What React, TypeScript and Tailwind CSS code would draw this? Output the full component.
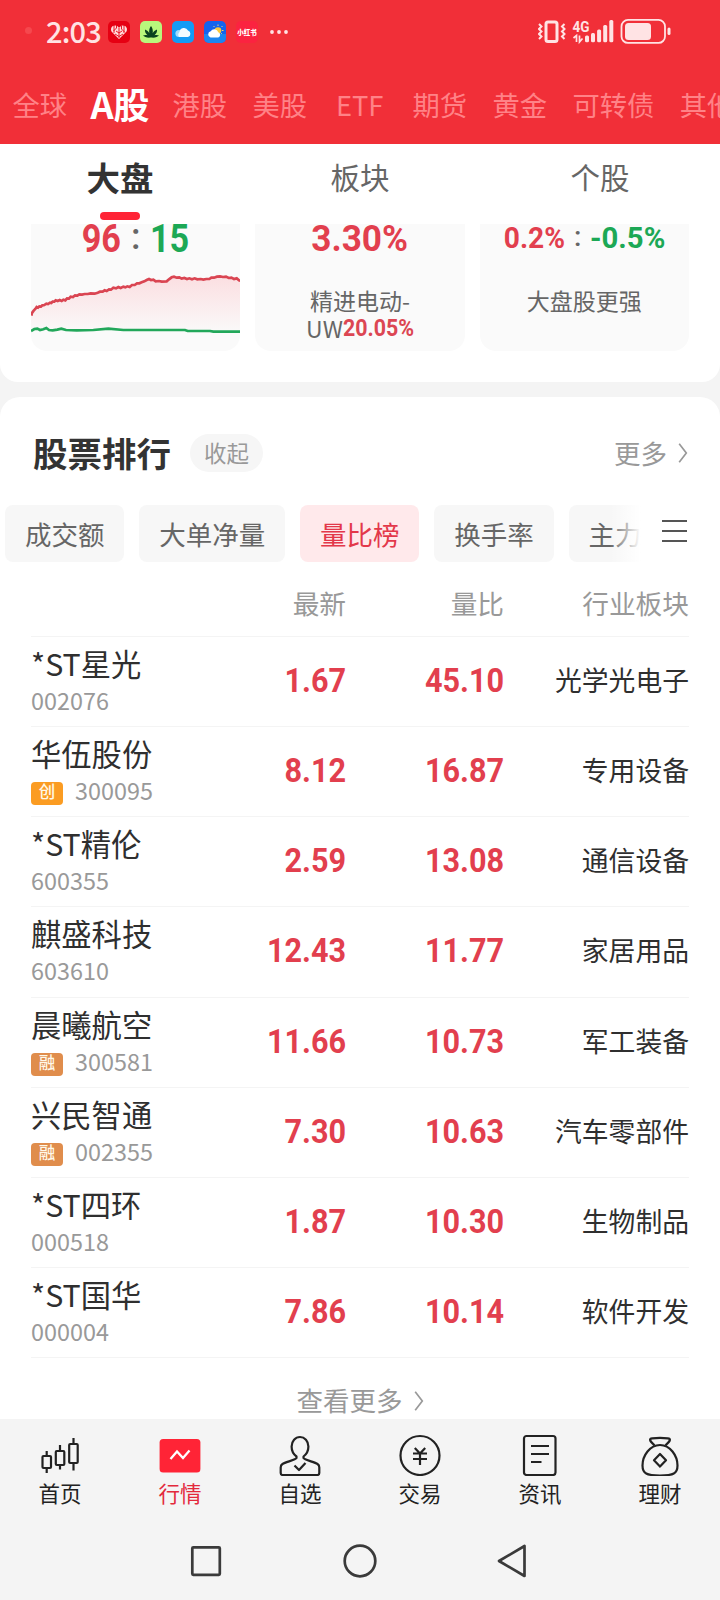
import type { ReactNode } from "react";

const markets = ["全球", "A股", "港股", "美股", "ETF", "期货", "黄金", "可转债", "其他"];

type Stock = { name: string; code: string; tag?: string; price: string; ratio: string; sector: string };

const stocks: Stock[] = [
  { name: "*ST星光", code: "002076", price: "1.67", ratio: "45.10", sector: "光学光电子" },
  { name: "华伍股份", code: "300095", tag: "创", price: "8.12", ratio: "16.87", sector: "专用设备" },
  { name: "*ST精伦", code: "600355", price: "2.59", ratio: "13.08", sector: "通信设备" },
  { name: "麒盛科技", code: "603610", price: "12.43", ratio: "11.77", sector: "家居用品" },
  { name: "晨曦航空", code: "300581", tag: "融", price: "11.66", ratio: "10.73", sector: "军工装备" },
  { name: "兴民智通", code: "002355", tag: "融", price: "7.30", ratio: "10.63", sector: "汽车零部件" },
  { name: "*ST四环", code: "000518", price: "1.87", ratio: "10.30", sector: "生物制品" },
  { name: "*ST国华", code: "000004", price: "7.86", ratio: "10.14", sector: "软件开发" },
];

function StatusBar() {
  return (
    <div className="flex h-[64px] items-center pl-[25px] pr-[48px] text-[#ffe3e4]">
      <span className="mt-[-4px] size-[7px] rounded-full bg-[#f5484e]" />
      <span className="mt-[-4px] ml-[14px] w-[55px] text-[29px] leading-[32px] font-medium tracking-[-0.8px]">2:03</span>
      <div className="ml-[7px] flex items-center gap-[10px]">
        <svg width="22" height="22" viewBox="0 0 22 22">
          <rect width="22" height="22" rx="5" fill="#e60012" />
          <path d="M11 18 3.500 10.500C2 7 4.500 4 7.500 4.500 9.500 4.500 10.500 6 11 7 11.500 6 13 4.500 15 4.500c3 0 5 3 3.500 6Z" fill="#ffdcdc" />
          <path d="M6 4v8M8.500 4v3l-3 3M11 7v10M13.500 5v3l3 3M16 4v8M8 10l3 2 3-2M7 13l4 2.500 4-2.500" stroke="#e60012" strokeWidth="0.9" fill="none" />
        </svg>
        <svg width="22" height="22" viewBox="0 0 22 22">
          <rect width="22" height="22" rx="5" fill="#b9f77c" />
          <path d="M11 16.500C7 17 4.500 16 3 14.500c1.500-.7 3-.8 4.500-.3C5.500 12.500 4.700 10.500 5 8.500c2 .8 3.500 2 4.300 3.800C8.800 9.500 9.500 7 11 5c1.500 2 2.200 4.500 1.700 7.300C13.500 10.500 15 9.300 17 8.500c.3 2-.5 4-2.500 5.700 1.500-.5 3-.4 4.500.3-1.500 1.500-4 2.500-8 2Z" fill="#09421f" />
        </svg>
        <svg width="22" height="22" viewBox="0 0 22 22">
          <rect width="22" height="22" rx="5" fill="#139bf5" />
          <circle cx="7" cy="12.500" r="3.600" fill="#9fdcff" />
          <path d="M7 16a4 4 0 0 1 .5-5A4.500 4.500 0 0 1 16 9.500 3.400 3.400 0 0 1 16 16Z" fill="#f2fbff" />
        </svg>
        <svg width="22" height="22" viewBox="0 0 22 22">
          <rect width="22" height="22" rx="5" fill="#1463ee" />
          <path d="M0 13h22v4a5 5 0 0 1-5 5H5a5 5 0 0 1-5-5Z" fill="#1c86f0" />
          <path d="M14 3.500v1.500M18.500 5l-1 1M19.500 9.500h-1.500M9.500 5l1 1M18 13l-.8-.8" stroke="#e9d37a" strokeWidth="1" />
          <circle cx="14" cy="9.500" r="3.300" fill="#fbc93c" />
          <path d="M6.500 16.500a3.200 3.200 0 0 1 .2-6.200 4.200 4.200 0 0 1 7.600.9 2.800 2.800 0 0 1 0 5.300Z" fill="#fff" />
        </svg>
        <div className="flex size-[22px] items-center justify-center rounded-[5px] bg-[#fb2340]">
          <span className="text-[6.500px] leading-none font-black whitespace-nowrap text-white">小红书</span>
        </div>
        <svg className="ml-[2px]" width="18" height="4" viewBox="0 0 18 4" fill="currentColor">
          <circle cx="2" cy="2" r="1.900" />
          <circle cx="9" cy="2" r="1.900" />
          <circle cx="16" cy="2" r="1.900" />
        </svg>
      </div>
      <svg className="ml-auto" width="134" height="26" viewBox="0 0 134 26" fill="none">
        <rect x="8" y="3" width="11" height="19.500" rx="2" stroke="currentColor" strokeWidth="3" />
        <path d="M1 5l2.500 2.500L1 10l2.500 2.500L1 15l2.500 2.500L1 20M26.500 5 24 7.500l2.500 2.500-2.500 2.500 2.500 2.500-2.500 2.500 2.500 2.500" stroke="currentColor" strokeWidth="2" />
        <text x="34.500" y="13" fontSize="15.500" fontWeight="700" fill="currentColor" fontFamily="Roboto" textLength="17" lengthAdjust="spacingAndGlyphs">
          4G
        </text>
        <path d="M35.500 19l3-2.500V23M41.500 16.500V23l3-3.500" stroke="currentColor" strokeWidth="1.700" />
        <g fill="currentColor">
          <rect x="47" y="16.500" width="4" height="6.800" rx="1.500" />
          <rect x="53" y="14" width="4" height="9.300" rx="1.500" />
          <rect x="59.100" y="10.500" width="4" height="12.800" rx="1.500" />
          <rect x="65.200" y="6" width="4" height="17.300" rx="1.500" />
          <rect x="71.300" y="1" width="4" height="22.300" rx="1.500" />
        </g>
        <rect x="83.500" y="0.900" width="43.500" height="23" rx="6.500" stroke="currentColor" strokeWidth="1.800" />
        <rect x="87" y="4" width="26" height="17" rx="3.500" fill="currentColor" />
        <rect x="129.500" y="8.500" width="3" height="7.500" rx="1.500" fill="currentColor" />
      </svg>
    </div>
  );
}

function TopBar() {
  return (
    <header className="h-[144px] shrink-0 overflow-hidden bg-[#f12f38]">
      <StatusBar />
      <nav className="flex h-[80px] items-center text-[27.300px] leading-[40px] whitespace-nowrap text-[#ff8287]">
        {markets.map((m) =>
          m === "A股" ? (
            <span key={m} className="mt-[-2px] flex w-[80px] shrink-0 justify-center text-[36px] font-bold text-white">
              {m}
            </span>
          ) : (
            <span key={m} className="min-w-[80px] shrink-0 pr-[13px] pl-[12.400px] text-center">
              {m}
            </span>
          ),
        )}
      </nav>
    </header>
  );
}

function Chevron() {
  return (
    <svg width="10" height="20" viewBox="0 0 10 20" fill="none" stroke="#999" strokeWidth="1.700">
      <path d="M1.200 0.800 8.300 10 1.200 19.200" />
    </svg>
  );
}

function Overview() {
  return (
    <section className="h-[238px] shrink-0 rounded-b-[18px] bg-white">
      <div className="grid h-[80px] grid-cols-3 text-center text-[29.500px] leading-[65px] text-[#666]">
        <div className="flex flex-col items-center">
          <span className="h-[68px] text-[33.500px] leading-[65px] font-bold text-[#333]">大盘</span>
          <span className="h-2 w-10 rounded-full bg-[#ff2436]" />
        </div>
        <span>板块</span>
        <span>个股</span>
      </div>
      <div className="grid h-[127px] grid-cols-3 gap-[15px] px-[31px] text-center">
        <div className="flex flex-col overflow-hidden rounded-b-[16px] bg-[#fafafa]">
          <div className="flex h-[29px] justify-center font-[Roboto] text-[38px] leading-[30px] font-bold">
            <span className="w-[46px] origin-right scale-x-[.9] text-right text-[#e23f4e]">96</span>
            <span className="w-[29px] text-[36px] leading-[27px] font-medium text-[#666]">:</span>
            <span className="w-[46px] origin-left scale-x-[.9] text-left text-[#1ca855]">15</span>
          </div>
          <svg width="210" height="98" viewBox="93 339 630 294" preserveAspectRatio="none" fill="none">
            <defs>
              <linearGradient id="rise" x1="0" y1="400" x2="0" y2="570" gradientUnits="userSpaceOnUse">
                <stop offset="0" stopColor="#fbdde0" />
                <stop offset="1" stopColor="#faf8f8" />
              </linearGradient>
            </defs>
            <path
              d="M93 527 100 513 109 502 130 496 160 484 195 479 225 467 280 461 320 450 350 443 390 440 420 428 445 419 470 424 500 424 518 411 545 415 580 417 625 418 660 409 690 415 723 423V571H93Z"
              fill="url(#rise)"
            />
            <path
              d="M94 527 96 519 101 512 106 507 110 501 114 503 118 499 123 500 127 496 133 495 139 491 144 492 150 488 154 489 158 485 163 485 167 481 173 483 179 480 185 483 190 479 196 481 201 475 207 476 212 470 219 471 225 466 232 467 238 463 246 464 254 462 263 462 272 460 284 461 293 458 300 455 308 455 314 451 320 453 327 448 333 449 340 443 348 445 355 441 362 444 370 440 376 442 382 439 389 441 396 435 404 435 411 430 418 430 425 427 433 424 440 420 447 417 453 420 460 419 467 424 477 423 485 425 500 424 507 418 515 412 522 410 530 413 538 412 545 416 553 414 561 417 568 415 576 418 584 415 592 418 602 417 610 419 619 417 628 417 634 413 642 413 651 410 660 409 669 411 678 410 686 414 694 413 702 417 710 415 717 421 723 423"
              stroke="#da4552"
              strokeWidth="8"
            />
            <path
              d="M93 573 103 567 112 566 120 570 130 568 139 564 147 570 158 571 172 569 184 566 198 570 230 571 280 570 325 566 370 570 480 570 555 570 563 573 630 573 640 575 723 575"
              stroke="#22a75a"
              strokeWidth="8"
            />
          </svg>
        </div>
        <div className="flex flex-col overflow-hidden rounded-b-[16px] bg-[#fafafa]">
          <div className="h-[63px] scale-x-[.95] font-[Roboto] text-[37px] leading-[30px] font-bold text-[#e23f4e]">3.30%</div>
          <div className="text-[23px] leading-[27.500px] text-[#666]">
            精进电动-
            <div className="flex justify-center">
              <span className="w-[38px]">UW</span>
              <span className="w-[71px] origin-left scale-x-[.93] text-left font-[Roboto] font-bold text-[#dc4653]">20.05%</span>
            </div>
          </div>
        </div>
        <div className="flex flex-col overflow-hidden rounded-b-[16px] bg-[#fafafa]">
          <div className="flex h-[63px] justify-center font-[Roboto] text-[29px] leading-[29px] font-bold">
            <span className="w-[77px] origin-right scale-x-[.97] pr-px text-right text-[#e23f4e]">0.2%</span>
            <span className="w-[24px] text-[28px] leading-[26px] font-medium text-[#666]">:</span>
            <span className="w-[90px] origin-left scale-x-[1.01] text-left text-[#1ca855]">-0.5%</span>
          </div>
          <div className="text-[23px] leading-[27.500px] text-[#666]">大盘股更强</div>
        </div>
      </div>
    </section>
  );
}

const chip = "flex h-[57px] shrink-0 items-center rounded-[8px] px-[19.900px]";

function Ranking() {
  return (
    <section className="mt-[15px] flex h-[1022px] shrink-0 flex-col overflow-hidden rounded-t-[20px] bg-white">
      <div className="flex h-[108px] shrink-0 items-center pt-[3px] pr-[32px] pl-[33px]">
        <h2 className="mt-[-2px] text-[34.500px] leading-[44px] font-bold text-[#333]">股票排行</h2>
        <span className="ml-[19px] flex h-[38px] w-[73px] items-center justify-center rounded-full bg-[#f6f6f6] pb-[2px] text-[22.500px] leading-[36px] text-[#999]">
          收起
        </span>
        <span className="mr-[11px] ml-auto text-[26.500px] leading-[40px] text-[#999]">更多</span>
        <Chevron />
      </div>
      <div className="flex h-[57px] shrink-0 items-center pr-[33px] pl-[5px] text-[26.500px] leading-[36px] text-[#666]">
        <div className="relative flex w-[639px] gap-[15px] overflow-hidden whitespace-nowrap">
          <span className={`${chip} bg-[#f7f7f7]`}>成交额</span>
          <span className={`${chip} bg-[#f7f7f7]`}>大单净量</span>
          <span className={`${chip} bg-[#ffe9eb] text-[#e3384a]`}>量比榜</span>
          <span className={`${chip} bg-[#f7f7f7]`}>换手率</span>
          <span className={`${chip} bg-[#f7f7f7]`}>主力净额</span>
          <span className="absolute top-0 right-0 h-full w-[34px] bg-linear-to-r from-white/0 to-white to-90%" />
        </div>
        <svg className="mb-[5px] ml-auto shrink-0" width="25" height="22" viewBox="0 0 25 22" stroke="#555" strokeWidth="2">
          <path d="M0 1h25M0 11h25M0 21h25" />
        </svg>
      </div>
      <div className="mx-[31px] grid h-[75px] shrink-0 grid-cols-[315px_158px_185px] border-b border-[#f4f4f4] text-right text-[26.700px] leading-[82px] text-[#999]">
        <span>最新</span>
        <span>量比</span>
        <span>行业板块</span>
      </div>
      {stocks.map((s) => (
        <div key={s.code} className="mx-[31px] grid h-[90.140px] shrink-0 grid-cols-[150px_165px_158px_185px] border-b border-[#f4f4f4]">
          <div>
            <div className="h-[47px] pt-[4px] text-[30.300px] leading-[44px] whitespace-nowrap text-[#2f2f2f]">{s.name}</div>
            <div className="flex items-center text-[23.400px] leading-[33px] text-[#999]">
              {s.tag && (
                <span
                  className={`mt-[6px] mr-[12px] flex h-[23px] w-[32px] items-center justify-center rounded-[4px] pb-[4px] text-[16.500px] leading-[19px] font-medium text-[#fff8e8] ${
                    s.tag === "创" ? "bg-[#fb9c22]" : "bg-[#e08d4c]"
                  }`}
                >
                  {s.tag}
                </span>
              )}
              {s.code}
            </div>
          </div>
          <span className="origin-right scale-x-[.9] text-right font-[Roboto] text-[34px] leading-[87px] font-bold text-[#e23f4e]">{s.price}</span>
          <span className="origin-right scale-x-[.9] text-right font-[Roboto] text-[34px] leading-[87px] font-bold text-[#e23f4e]">{s.ratio}</span>
          <span className="text-right text-[26.800px] leading-[86px] text-[#2f2f2f]">{s.sector}</span>
        </div>
      ))}
      <div className="flex h-[60.880px] shrink-0 items-end justify-center gap-[11px] text-[26.500px] leading-[38px] text-[#999]">
        查看更多
        <span className="pb-[8px]">
          <Chevron />
        </span>
      </div>
    </section>
  );
}

function Icon({ children }: { children: ReactNode }) {
  return (
    <svg width="42" height="42" viewBox="0 0 42 42" fill="none" stroke="currentColor" strokeWidth="2.200" strokeLinejoin="round">
      {children}
    </svg>
  );
}

const tabs: { label: string; icon: ReactNode }[] = [
  {
    label: "首页",
    icon: (
      <Icon>
        <path d="M7.700 17v5M7.700 34v5M21 11v6M21 31v4.500M34.500 4v6M34.500 29v7.500" />
        <rect x="3.500" y="22" width="8.500" height="12" rx="1" />
        <rect x="16.800" y="17" width="8.500" height="14" rx="1" />
        <rect x="30.200" y="10" width="8.500" height="19" rx="1" />
      </Icon>
    ),
  },
  {
    label: "行情",
    icon: (
      <Icon>
        <rect x="0.600" y="5" width="40.800" height="33.500" rx="3.500" fill="#ff2436" stroke="none" />
        <path d="m11.500 25 6.500-7.500 6 6.500 6.500-7.500" stroke="#fff" strokeWidth="2.300" strokeLinejoin="miter" />
      </Icon>
    ),
  },
  {
    label: "自选",
    icon: (
      <Icon>
        <path d="M17.500 22.500C13.500 19.500 12.600 15.500 12.600 12.500a8.400 9.500 0 0 1 16.800 0c0 3-1 7-4.900 10V24c1 2 11 4 14 6 1.500 1 1.800 2 1.800 3.500V39q0 2-2 2H3.700q-2 0-2-2v-5.500c0-1.500.3-2.500 1.800-3.500 3-2 13-4 14-6Z" />
        <path d="m15.500 31.500 4.500 4.500 6.500-7" />
      </Icon>
    ),
  },
  {
    label: "交易",
    icon: (
      <Icon>
        <circle cx="21" cy="21.500" r="19.500" />
        <path d="m15.800 14 5.200 5.500 5.200-5.500M14 19.500h14M14 25h14M21 19.500V31" />
      </Icon>
    ),
  },
  {
    label: "资讯",
    icon: (
      <Icon>
        <rect x="5" y="2" width="31.500" height="39" rx="2.500" />
        <path d="M12 12h18M12 20h18M12 28h10.500" />
      </Icon>
    ),
  },
  {
    label: "理财",
    icon: (
      <Icon>
        <path d="M15.500 11.500c-1.500-2-3.500-3-4.300-5-.5-1.500.5-2 2-2.200q7.800-.8 15.600 0c1.500.2 2.500.7 2 2.200-.8 2-2.800 3-4.300 5" />
        <path d="M21 11c10 0 17.500 10.500 17.500 20.500 0 8-4 10-17.500 10s-17.500-2-17.500-10C3.500 21.500 11 11 21 11Z" />
        <path d="m21 20 6 6.300-6 6.300-6-6.300Z" />
      </Icon>
    ),
  },
];

function BottomBar() {
  return (
    <footer className="flex h-[181px] shrink-0 flex-col bg-[#f4f4f4]">
      <nav className="grid h-[103px] grid-cols-6 pt-[15px] text-[#222]">
        {tabs.map((t) => (
          <div key={t.label} className={`flex flex-col items-center ${t.label === "行情" ? "text-[#e3293c]" : ""}`}>
            {t.icon}
            <span className="text-[21.500px] leading-[34px]">{t.label}</span>
          </div>
        ))}
      </nav>
      <svg className="mx-auto mt-[18px]" width="340" height="40" viewBox="190 1540 340 40" fill="none" stroke="#3a3a3a" strokeWidth="2.700" strokeLinejoin="round">
        <rect x="192.300" y="1547.300" width="27.500" height="27.500" rx="1" />
        <circle cx="360" cy="1561" r="15.300" />
        <path d="M524.500 1546v30L499 1561Z" />
      </svg>
    </footer>
  );
}

export default function App() {
  return (
    <div className="flex h-[1600px] w-[720px] flex-col overflow-hidden bg-[#f4f4f4] font-['Noto_Sans_CJK_SC',sans-serif]">
      <TopBar />
      <Overview />
      <Ranking />
      <BottomBar />
    </div>
  );
}
